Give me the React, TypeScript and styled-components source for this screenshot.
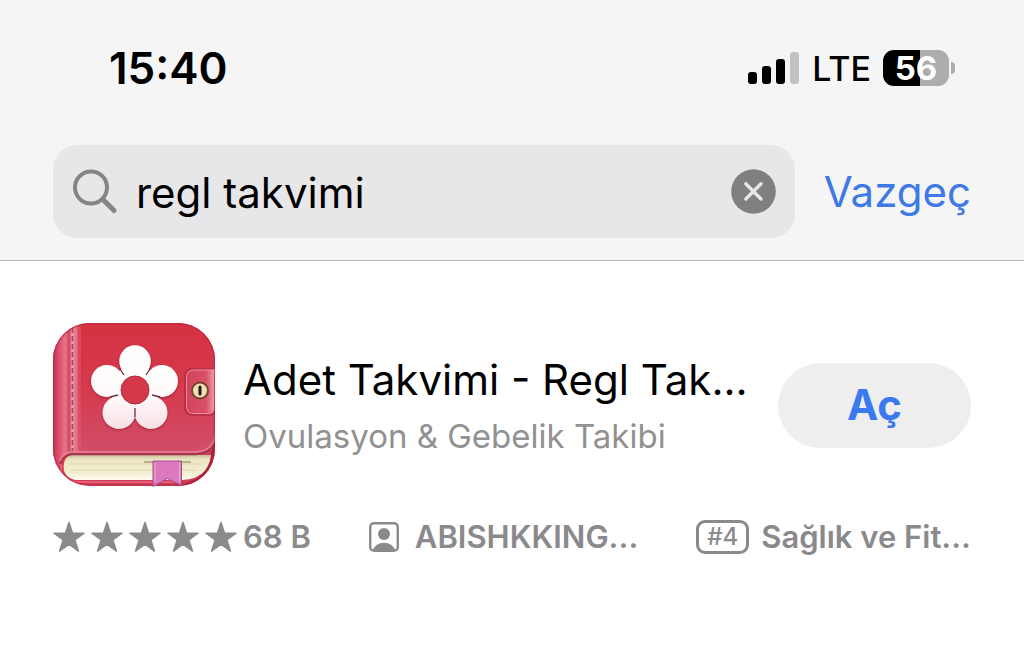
import React, { useState } from "react";
import styled, { createGlobalStyle } from "styled-components";

const GlobalStyle = createGlobalStyle`
  *, *::before, *::after { box-sizing: border-box; }
  body {
    margin: 0;
    background: #fff;
    color: #000;
    font-family: Inter, "Liberation Sans", sans-serif;
  }
  button, input { font: inherit; color: inherit; }
`;

const Header = styled.header`
  background: #f5f5f6;
  border-bottom: 1px solid #bcbcbe;
  padding: 44px 53px 22px;
`;

const StatusBar = styled.div`
  display: flex;
  align-items: center;
  justify-content: space-between;
  height: 48px;
  padding: 0 16px 0 56px;
`;

const Clock = styled.time`
  font-size: 44px;
  line-height: 48px;
  font-weight: 600;
`;

const StatusIcons = styled.div`
  display: flex;
  align-items: center;
  gap: 12px;
`;

const Network = styled.span`
  padding-top: 2px;
  font-size: 34px;
  line-height: 48px;
  font-weight: 500;
`;

const Battery = styled.div`
  display: flex;
  align-items: center;
  gap: 2px;
`;

const BatteryBody = styled.span<{ $level: number }>`
  display: flex;
  align-items: center;
  justify-content: center;
  width: 66px;
  height: 36px;
  border-radius: 11px;
  background: linear-gradient(to right, #000 ${(p) => p.$level}%, #adadad ${(p) => p.$level}%);
  color: #fff;
  font-size: 33px;
  line-height: 36px;
  font-weight: 700;
`;

const BatteryTip = styled.span`
  width: 4px;
  height: 12px;
  border-radius: 0 4px 4px 0;
  background: #adadad;
`;

const SearchBar = styled.form`
  display: flex;
  align-items: center;
  gap: 29px;
  margin-top: 53px;
`;

const SearchField = styled.label`
  display: flex;
  flex: 1;
  align-items: center;
  min-width: 0;
  height: 93px;
  padding: 0 19px 0 20px;
  border-radius: 24px;
  background: #e7e7e9;
`;

const SearchInput = styled.input`
  flex: 1;
  min-width: 0;
  height: 56px;
  margin-left: 18px;
  padding: 2px 0 0;
  border: 0;
  outline: 0;
  background: transparent;
  font-size: 42px;
`;

const ClearButton = styled.button`
  display: flex;
  padding: 0;
  border: 0;
  background: none;
`;

const CancelButton = styled.button`
  padding: 0;
  border: 0;
  background: none;
  color: #3e79e5;
  font-size: 42px;
  line-height: 56px;
`;

const Result = styled.article`
  padding: 62px 53px 0;
`;

const AppRow = styled.div`
  display: flex;
  align-items: center;
  gap: 28px;
`;

const AppText = styled.div`
  flex: 1;
  min-width: 0;
  padding-top: 6px;
  white-space: nowrap;
`;

const AppName = styled.h2`
  margin: 0;
  font-size: 42px;
  line-height: 56px;
  font-weight: 400;
`;

const AppSubtitle = styled.p`
  margin: 0;
  color: #919191;
  font-size: 33px;
  line-height: 56px;
`;

const OpenButton = styled.button`
  width: 193px;
  height: 85px;
  border: 0;
  border-radius: 43px;
  background: #eeeeef;
  color: #3b7aee;
  font-size: 42px;
  line-height: 56px;
  font-weight: 700;
`;

const MetaRow = styled.div`
  display: flex;
  align-items: center;
  justify-content: space-between;
  margin-top: 30px;
  color: #8a8a8c;
  font-size: 31px;
  line-height: 40px;
  font-weight: 600;
  white-space: nowrap;
`;

const MetaItem = styled.div<{ $gap: number }>`
  display: flex;
  align-items: center;
  gap: ${(p) => p.$gap}px;
`;

const Stars = styled.span`
  display: flex;
  gap: 6px;
`;

const Rank = styled.span`
  padding: 0 8px;
  border: 3px solid currentColor;
  border-radius: 9px;
  font-size: 24px;
  line-height: 28px;
  font-weight: 500;
`;

const Signal = () => (
  <svg width="52" height="34" viewBox="0 0 52 34" aria-hidden="true">
    <rect x="0" y="21" width="9" height="12" rx="3" />
    <rect x="14" y="15" width="9" height="18" rx="3" />
    <rect x="28" y="8" width="9" height="25" rx="3" />
    <rect x="42" y="1" width="9" height="32" rx="3" fill="#c2c2c2" />
  </svg>
);

const SearchIcon = () => (
  <svg width="45" height="46" viewBox="0 0 45 46" fill="none" stroke="#858588" strokeLinecap="round" aria-hidden="true">
    <circle cx="18" cy="18.5" r="16" strokeWidth="4" />
    <path d="M30 30.5 41 41.5" strokeWidth="5" />
  </svg>
);

const ClearIcon = () => (
  <svg width="45" height="45" viewBox="0 0 45 45" aria-hidden="true">
    <circle cx="22.5" cy="22.5" r="22.3" fill="#808083" />
    <path d="M14.8 14.8 30 30M30 14.8 14.8 30" stroke="#e7e7e9" strokeWidth="3.4" strokeLinecap="round" />
  </svg>
);

const Star = () => (
  <svg width="32" height="32" viewBox="0 0 32 32" fill="currentColor" stroke="currentColor" strokeWidth="1.6" strokeLinejoin="round" aria-hidden="true">
    <path d="M16 1.5 19.5 12.2H31L21.8 18.9 25.4 30 16 23.2 6.6 30 10.2 18.9 1 12.2H12.5Z" />
  </svg>
);

const DeveloperIcon = () => (
  <svg width="30" height="30" viewBox="0 0 30 30" fill="currentColor" aria-hidden="true">
    <rect x="1.2" y="1.2" width="27.6" height="27.6" rx="3.8" fill="none" stroke="currentColor" strokeWidth="2.4" />
    <circle cx="15" cy="12" r="6" />
    <path d="M3.5 28.5C5.5 23.5 9.5 20.7 15 20.7S24.5 23.5 26.5 28.5Z" />
  </svg>
);

const DiaryIcon = () => (
  <svg width="162" height="164" viewBox="0 0 162 164" role="img" aria-label="Adet Takvimi">
    <defs>
      <clipPath id="tile">
        <rect width="162" height="163" rx="37" />
      </clipPath>
      <linearGradient id="cover" x1="0" y1="0" x2="0" y2="1">
        <stop offset="0" stopColor="#d43241" />
        <stop offset=".45" stopColor="#d63a4c" />
        <stop offset="1" stopColor="#cf5472" />
      </linearGradient>
      <linearGradient id="spine" x1="0" y1="0" x2="1" y2="0">
        <stop offset="0" stopColor="#c43354" />
        <stop offset=".25" stopColor="#dc5370" />
        <stop offset=".45" stopColor="#e8748a" />
        <stop offset=".62" stopColor="#cf4560" />
        <stop offset=".87" stopColor="#e77990" />
        <stop offset="1" stopColor="#d54861" stopOpacity="0" />
      </linearGradient>
      <linearGradient id="pages" x1="0" y1="0" x2="0" y2="1">
        <stop offset="0" stopColor="#c9bd98" />
        <stop offset=".18" stopColor="#ece6c6" />
        <stop offset=".7" stopColor="#f3eecf" />
        <stop offset="1" stopColor="#fffdf0" />
      </linearGradient>
      <linearGradient id="clasp" x1="0" y1="0" x2="1" y2="0">
        <stop offset="0" stopColor="#d4425a" />
        <stop offset=".7" stopColor="#d95069" />
        <stop offset="1" stopColor="#f3a0b0" />
      </linearGradient>
      <linearGradient id="petal" gradientUnits="userSpaceOnUse" x1="0" y1="22" x2="0" y2="108">
        <stop offset="0" stopColor="#fff" />
        <stop offset=".6" stopColor="#fffafa" />
        <stop offset="1" stopColor="#f7dfe4" />
      </linearGradient>
      <filter id="shade" x="-20%" y="-20%" width="140%" height="140%">
        <feDropShadow dx="0" dy="1" stdDeviation="1" floodColor="#7b1328" floodOpacity=".65" />
      </filter>
    </defs>
    <g clipPath="url(#tile)">
      <rect width="162" height="164" fill="#cf3b55" />
      <path d="M162 116V164H108C143 164 156 149 158 130Z" fill="#a91f3a" />
      <path d="M18 132H158C156 149 145 157 127 157H25C14 157 9 149 11 140Q12 134 18 132Z" fill="url(#pages)" />
      <path d="M15 141H149M18 147H142" stroke="#ddd5b0" strokeWidth="1" />
      <path d="M0 0H162V111Q162 130 143 130H18Q9 130 6 142L0 148Z" fill="url(#cover)" />
      <path d="M0 0H27V130H18Q9 130 6 146L0 150Z" fill="url(#spine)" />
      <path d="M7 141Q10 131 20 131H143Q162 130 162 110" fill="none" stroke="#a5384c" strokeWidth="2.4" />
      <path d="M7 138Q10 129 20 129H143Q161 128 162 110" fill="none" stroke="#ed8297" strokeWidth="1.4" />
      <path d="M8 141Q7 159 26 159H127" fill="none" stroke="#e55c77" strokeWidth="2" />
      <path d="M19.5 5V128" stroke="#f7a7b6" strokeWidth="4" opacity=".75" />
      <path d="M19.5 5V128" stroke="#a04a60" strokeWidth="1.8" strokeDasharray="5 3" />
      <path d="M27 0V129" stroke="#eb7187" strokeWidth="1" opacity=".6" />
      <rect x=".7" y=".7" width="160.6" height="161.6" rx="36.3" fill="none" stroke="#ba2744" strokeWidth="1.4" opacity=".6" />
    </g>
    <path d="M91 139H138" stroke="#807248" strokeWidth="2" opacity=".45" />
    <path d="M100 138H128.500V162.500L114.500 155.500 100 163.500Z" fill="#dc78bd" stroke="#a35088" strokeWidth="1" />
    <path d="M102 140V159M126.500 140V159" stroke="#efadd9" strokeWidth="1" />
    <g filter="url(#shade)" fill="url(#petal)">
      <circle cx="82" cy="38" r="15.7" />
      <circle cx="54" cy="58" r="15.9" />
      <circle cx="109" cy="58" r="15.9" />
      <circle cx="66" cy="89.5" r="16.4" />
      <circle cx="98" cy="89.5" r="16.4" />
      <circle cx="82" cy="66" r="24" />
    </g>
    <path d="M67 46 71 52M97 46 93 52M57 74 65 72M107 74 99 72M82 94V85" stroke="#663341" strokeWidth="1.3" />
    <circle cx="82" cy="67" r="14" fill="#d4384a" stroke="#a82f3d" />
    <path d="M162 46H140Q132 46 132 54V84Q132 92 140 92H157Q162 92 162 84Z" fill="url(#clasp)" stroke="#b62b44" strokeWidth="1.6" />
    <path d="M162 47H141Q133.5 47 133.5 54V83Q133.5 90.5 140 90.5H157" fill="none" stroke="#ed899a" strokeWidth="1" />
    <circle cx="147" cy="67.5" r="8" fill="#f0dfb5" stroke="#78432f" strokeWidth="2" />
    <path d="M147 64V71" stroke="#241814" strokeWidth="3" strokeLinecap="round" />
  </svg>
);

export default function App() {
  const [query, setQuery] = useState("regl takvimi");

  return (
    <>
      <GlobalStyle />
      <Header>
        <StatusBar>
          <Clock>15:40</Clock>
          <StatusIcons>
            <Signal />
            <Network>LTE</Network>
            <Battery>
              <BatteryBody $level={56}>56</BatteryBody>
              <BatteryTip />
            </Battery>
          </StatusIcons>
        </StatusBar>
        <SearchBar onSubmit={(e) => e.preventDefault()}>
          <SearchField>
            <SearchIcon />
            <SearchInput
              type="text"
              aria-label="Ara"
              value={query}
              onChange={(e) => setQuery(e.target.value)}
            />
            <ClearButton type="button" aria-label="Temizle" onClick={() => setQuery("")}>
              <ClearIcon />
            </ClearButton>
          </SearchField>
          <CancelButton type="button">Vazgeç</CancelButton>
        </SearchBar>
      </Header>
      <main>
        <Result>
          <AppRow>
            <DiaryIcon />
            <AppText>
              <AppName>Adet Takvimi - Regl Tak...</AppName>
              <AppSubtitle>Ovulasyon &amp; Gebelik Takibi</AppSubtitle>
            </AppText>
            <OpenButton type="button">Aç</OpenButton>
          </AppRow>
          <MetaRow>
            <MetaItem $gap={6}>
              <Stars>
                {[1, 2, 3, 4, 5].map((n) => (
                  <Star key={n} />
                ))}
              </Stars>
              <span>68 B</span>
            </MetaItem>
            <MetaItem $gap={16}>
              <DeveloperIcon />
              <span>ABISHKKING...</span>
            </MetaItem>
            <MetaItem $gap={12}>
              <Rank>#4</Rank>
              <span>Sağlık ve Fit...</span>
            </MetaItem>
          </MetaRow>
        </Result>
      </main>
    </>
  );
}
